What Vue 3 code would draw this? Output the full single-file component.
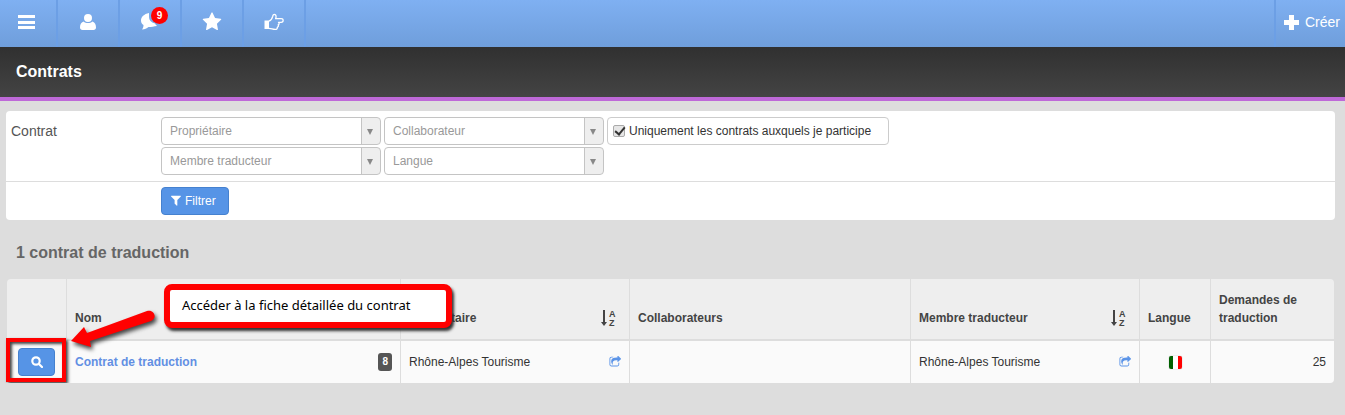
<script setup>
import { ref } from 'vue'

const onlyMine = ref(true)
const filters = [
  { id: 'owner', label: 'Propriétaire' },
  { id: 'collaborator', label: 'Collaborateur' },
  { id: 'translator', label: 'Membre traducteur' },
  { id: 'language', label: 'Langue' }
]
const contracts = [
  { name: 'Contrat de traduction', count: 8, owner: 'Rhône-Alpes Tourisme', collaborators: '', translator: 'Rhône-Alpes Tourisme', requests: 25 }
]
const sharePath = 'M1472 989v259q0 119-84.5 203.5t-203.5 84.5h-832q-119 0-203.5-84.5t-84.5-203.5v-832q0-119 84.5-203.5t203.5-84.5h255q13 0 22.5 9.5t9.5 22.5q0 27-26 32-77 26-133 60-10 4-16 4h-112q-66 0-113 47t-47 113v832q0 66 47 113t113 47h832q66 0 113-47t47-113v-214q0-19 18-29 28-13 54-37 16-16 35-8 21 9 21 29zm237-496l-384 384q-18 19-45 19-12 0-25-5-39-17-39-59v-192h-160q-323 0-438 131-119 137-74 473 3 23-20 34-8 2-12 2-16 0-26-13-10-14-21-31t-39.5-68.5-49.5-99.5-38.5-114-17.5-122q0-49 3.5-91t14-90 28-88 47-81.5 68.5-74 94.5-61.5 124.5-48.5 159.5-30.5 196.5-11h160v-192q0-42 39-59 13-5 25-5 26 0 45 19l384 384q19 19 19 45t-19 45z'
</script>

<template>
  <div class="page">
    <nav class="topbar">
      <button class="nav-item nav-menu" type="button" aria-label="Menu">
        <svg width="18" height="16" viewBox="0 0 18 16"><path d="M1 1h17v3H1zM1 7h17v3H1zM1 12h17v3H1z" /></svg>
      </button>
      <button class="nav-item" type="button" aria-label="Profil">
        <svg width="18" height="18" viewBox="0 0 18 18"><path d="M5 5a4 4 0 1 1 8 0 4 4 0 1 1-8 0zM4.500 8.500c2.500 2 6.500 2 9 0 2.500 1 3.500 3 3.500 6 0 1.500-1 2.500-2.500 2.500h-11C2 17 1 16 1 14.500c0-3 1-5 3.500-6z" /></svg>
      </button>
      <button class="nav-item" type="button" aria-label="Messages">
        <span class="bubble">
          <svg width="20" height="18" viewBox="0 0 20 18"><path d="M9 0C4 1 1 4 1 7.500c0 2 1 3.500 2.500 4.500 0 2-.5 3-1.500 4.500 3 0 4.500-1 6.500-2.500 3 0 5.500-.5 8.500-1-1-1-1.500-1.500-2-2.500C11 9.500 9 7 9 4z" /></svg>
          <span class="nav-badge">9</span>
        </span>
      </button>
      <button class="nav-item" type="button" aria-label="Favoris">
        <svg width="20" height="20" viewBox="0 0 1792 1792"><path d="M1728 647q0 22-26 48l-363 354 86 500q1 7 1 20 0 21-10.500 35.500t-30.500 14.500q-19 0-40-12l-449-236-449 236q-22 12-40 12-21 0-31.500-14.500t-10.500-35.500q0-6 2-20l86-500-364-354q-25-27-25-48 0-37 56-46l502-73 225-455q19-41 49-41t49 41l225 455 502 73q56 9 56 46z" /></svg>
      </button>
      <button class="nav-item" type="button" aria-label="Accès rapide">
        <svg width="20" height="18" viewBox="0 0 20 18">
          <path d="M.5 7.500H5V16H.5z" />
          <path class="line" d="M5 8.200c2-.8 3.200-2.600 3.700-4.800.3-1.600 1-2.200 2-1.900 1.500.4 1.800 2 .9 4.200h5.600c2.600 0 2.600 3.600 0 3.600h-2.700c1 1 .8 2.100-.3 2.600.6 1 .2 2-.9 2.400.2 1.500-.7 2.100-2.200 2.100C8.500 16.400 7.600 15.400 5 15.400" />
        </svg>
      </button>
      <button class="create" type="button">
        <svg width="15" height="15" viewBox="0 0 15 15"><path d="M5 0h5v5h5v5h-5v5H5v-5H0V5h5z" /></svg>
        Créer
      </button>
    </nav>

    <header class="title-bar"><h1>Contrats</h1></header>

    <main>
      <form class="filter-panel" @submit.prevent>
        <div class="filter-row">
          <span class="filter-label">Contrat</span>
          <div class="filter-fields">
            <div v-for="f in filters" :key="f.id" class="select-box">
              <select :id="f.id" :aria-label="f.label"><option>{{ f.label }}</option></select>
              <span class="caret"></span>
            </div>
            <label class="check-box"><input v-model="onlyMine" type="checkbox"><span>Uniquement les contrats auxquels je participe</span></label>
          </div>
        </div>
        <div class="filter-row actions">
          <button class="button" type="submit">
            <svg width="12" height="12" viewBox="50 150 1700 1700"><path d="M1595 295q17 41-14 70l-493 493v742q0 42-39 59-13 5-25 5-27 0-45-19l-256-256q-19-19-19-45v-486l-493-493q-31-29-14-70 17-39 59-39h1280q42 0 59 39z" /></svg>
            Filtrer
          </button>
        </div>
      </form>

      <h2>1 contrat de traduction</h2>

      <div class="table-area">
        <table>
          <colgroup>
            <col class="c-action"><col class="c-name"><col class="c-member"><col><col class="c-member"><col class="c-lang"><col class="c-requests">
          </colgroup>
          <thead>
            <tr>
              <th></th>
              <th>Nom</th>
              <th v-for="h in ['Propriétaire', 'Collaborateurs', 'Membre traducteur']" :key="h">
                <div class="spread">
                  <span>{{ h }}</span>
                  <svg v-if="h !== 'Collaborateurs'" class="sort" width="18" height="18" viewBox="0 0 18 18">
                    <path d="M3 1h2v12h2l-3 4-3-4h2z" />
                    <text x="9" y="8">A</text><text x="9" y="17">Z</text>
                  </svg>
                </div>
              </th>
              <th>Langue</th>
              <th>Demandes de traduction</th>
            </tr>
          </thead>
          <tbody>
            <tr v-for="c in contracts" :key="c.name">
              <td class="action">
                <button class="button view" type="button" aria-label="Voir le contrat">
                  <svg width="12" height="12" viewBox="0 0 12 12"><circle class="lens" cx="5" cy="5" r="3.700" /><path class="lens" d="M8 8l3 3" /></svg>
                </button>
                <span class="highlight"></span>
              </td>
              <td><div class="spread"><a class="name" href="#">{{ c.name }}</a><span class="count">{{ c.count }}</span></div></td>
              <td>
                <div class="spread"><span>{{ c.owner }}</span><a href="#" aria-label="Ouvrir le propriétaire"><svg width="12" height="12" viewBox="0 128 1728 1536"><path :d="sharePath" /></svg></a></div>
              </td>
              <td>{{ c.collaborators }}</td>
              <td>
                <div class="spread"><span>{{ c.translator }}</span><a href="#" aria-label="Ouvrir le membre traducteur"><svg width="12" height="12" viewBox="0 128 1728 1536"><path :d="sharePath" /></svg></a></div>
              </td>
              <td class="center"><span class="flag" role="img" aria-label="Italien"></span></td>
              <td class="number">{{ c.requests }}</td>
            </tr>
          </tbody>
        </table>
        <svg class="arrow" width="100" height="56" viewBox="0 0 100 56">
          <path d="M7 34L20 20 23 26 83 4C90 2 94 11 87 14L26 34 27 40z" />
        </svg>
        <div class="callout">Accéder à la fiche détaillée du contrat</div>
      </div>
    </main>
  </div>
</template>

<style>
html { background: #ddd; }
</style>

<style scoped>
.page { font: 12px/18px "Liberation Sans", Arial, sans-serif; color: #333; }
* { box-sizing: border-box; }
svg { display: block; fill: currentColor; flex: none; }
button { font: inherit; cursor: pointer; }

.topbar { display: flex; height: 47px; background: linear-gradient(#7fb0f2, #6f9edb); color: #fff; }
.nav-item { display: flex; align-items: center; justify-content: center; width: 62px; padding: 0 0 3px; border: 0; border-right: 2px solid #6c9fe5; background: none; color: #fff; }
.nav-menu { width: 58px; padding-right: 4px; }
.bubble { position: relative; }
.nav-badge { position: absolute; top: -6px; left: 11px; width: 17px; height: 17px; border-radius: 9px; background: #f00; font-size: 10px; line-height: 17px; font-weight: bold; text-align: center; }
.line { fill: none; stroke: currentColor; stroke-width: 1.3; stroke-linejoin: round; }
.lens { fill: none; stroke: currentColor; stroke-width: 2.2; stroke-linecap: round; }
.create { display: flex; align-items: center; gap: 6px; margin-left: auto; padding: 0 5px 3px 8px; border: 0; border-left: 2px solid #6c9fe5; background: none; color: #fff; font-size: 14px; }

.title-bar { height: 54px; border-bottom: 4px solid #be69d8; background: linear-gradient(#303030, #444); color: #fff; }
h1 { margin: 0; padding: 15px 16px; font-size: 16px; line-height: 20px; }

main { padding: 10px 10px 0 6px; }
.filter-panel { border-radius: 4px; background: #fff; }
.filter-row { display: flex; padding: 6px 5px; }
.filter-label { width: 150px; padding-top: 5px; font-size: 14px; color: #555; }
.filter-fields { display: grid; grid-template-columns: 220px 220px auto; gap: 2px 3px; }
.select-box { position: relative; height: 28px; }
.select-box select { appearance: none; width: 100%; height: 100%; padding: 0 28px 0 8px; border: 1px solid #c4c4c4; border-radius: 4px; background: linear-gradient(to left, #eee 18px, #c4c4c4 18px, #c4c4c4 19px, #fff 19px); font: inherit; color: #999; }
.caret { position: absolute; right: 8px; top: 12px; border: solid transparent; border-width: 6px 3px 0; border-top-color: #888; pointer-events: none; }
.check-box { grid-column: 3; grid-row: 1; display: flex; align-items: center; gap: 4px; height: 28px; padding: 0 17px 0 5px; border: 1px solid #ccc; border-radius: 4px; }
.check-box input { appearance: none; width: 12px; height: 12px; margin: 0; border: 1px solid #aaa; border-radius: 2px; background: #e6e6e6; }
.check-box input:checked::before { content: ""; display: block; width: 4px; height: 8px; margin: -1px 0 0 3px; border: solid #333; border-width: 0 2px 2px 0; transform: rotate(40deg); }
.actions { padding: 5px 5px 5px 155px; border-top: 1px solid #ddd; }
.button { display: flex; align-items: center; justify-content: center; gap: 3px; height: 28px; padding: 0 12px 0 8px; border: 1px solid #4581cf; border-radius: 4px; background: #5694e6; color: #fff; }

h2 { margin: 0; padding: 23px 10px 16px; font-size: 16px; line-height: 20px; color: #666; }

.table-area { position: relative; padding: 0 1px; }
table { width: 100%; table-layout: fixed; border-collapse: separate; border-spacing: 0; }
.c-action { width: 60px; }
.c-name { width: 334px; }
.c-member { width: 229px; }
.c-lang { width: 71px; }
.c-requests { width: 123px; }
th, td { border-right: 1px solid #ddd; text-align: left; }
th:last-child, td:last-child { border-right: 0; }
th { padding: 12px 8px; border-bottom: 2px solid #ddd; background: #eee; color: #444; vertical-align: bottom; }
td { height: 42px; padding: 7px 8px; background: #fafafa; }
th:first-child { border-top-left-radius: 4px; }
th:last-child { border-top-right-radius: 4px; }
td:last-child { border-bottom-right-radius: 4px; }
.spread { display: flex; align-items: center; justify-content: space-between; }
th .spread { height: 18px; padding-right: 3px; }
.sort text { font: bold 9px "Liberation Sans", sans-serif; }
a { color: #5b94e8; text-decoration: none; }
.name { color: #628fe3; font-weight: bold; }
.count { padding: 0 4px; border-radius: 3px; background: #555; color: #fff; font-size: 10px; font-weight: bold; }
.action { position: relative; padding: 7px 11px; }
.view { width: 37px; padding: 0; }
.center { text-align: center; }
.flag { display: inline-block; width: 13px; height: 13px; border-radius: 2px; background: linear-gradient(to right, #006000 4px, #fff 4px, #fff 9px, #f00 9px); box-shadow: 0 0 1px #888; vertical-align: middle; }
.number { text-align: right; }

.highlight { position: absolute; top: -3px; left: -1px; width: 60px; height: 44px; border: 4px solid #f00; box-shadow: 2px 2px 3px #444, inset 2px 2px 3px #444; pointer-events: none; }
.arrow { position: absolute; left: 58px; top: 28px; overflow: visible; fill: #f00; filter: drop-shadow(2px 3px 2px #444); pointer-events: none; }
.callout { position: absolute; left: 158px; top: 5px; width: 288px; height: 44px; padding: 5px 12px; border: 6px solid #f00; border-radius: 8px; background: #fff; box-shadow: 2px 3px 3px #333; color: #000; font: 13px/20px "Noto Sans", sans-serif; }
</style>
